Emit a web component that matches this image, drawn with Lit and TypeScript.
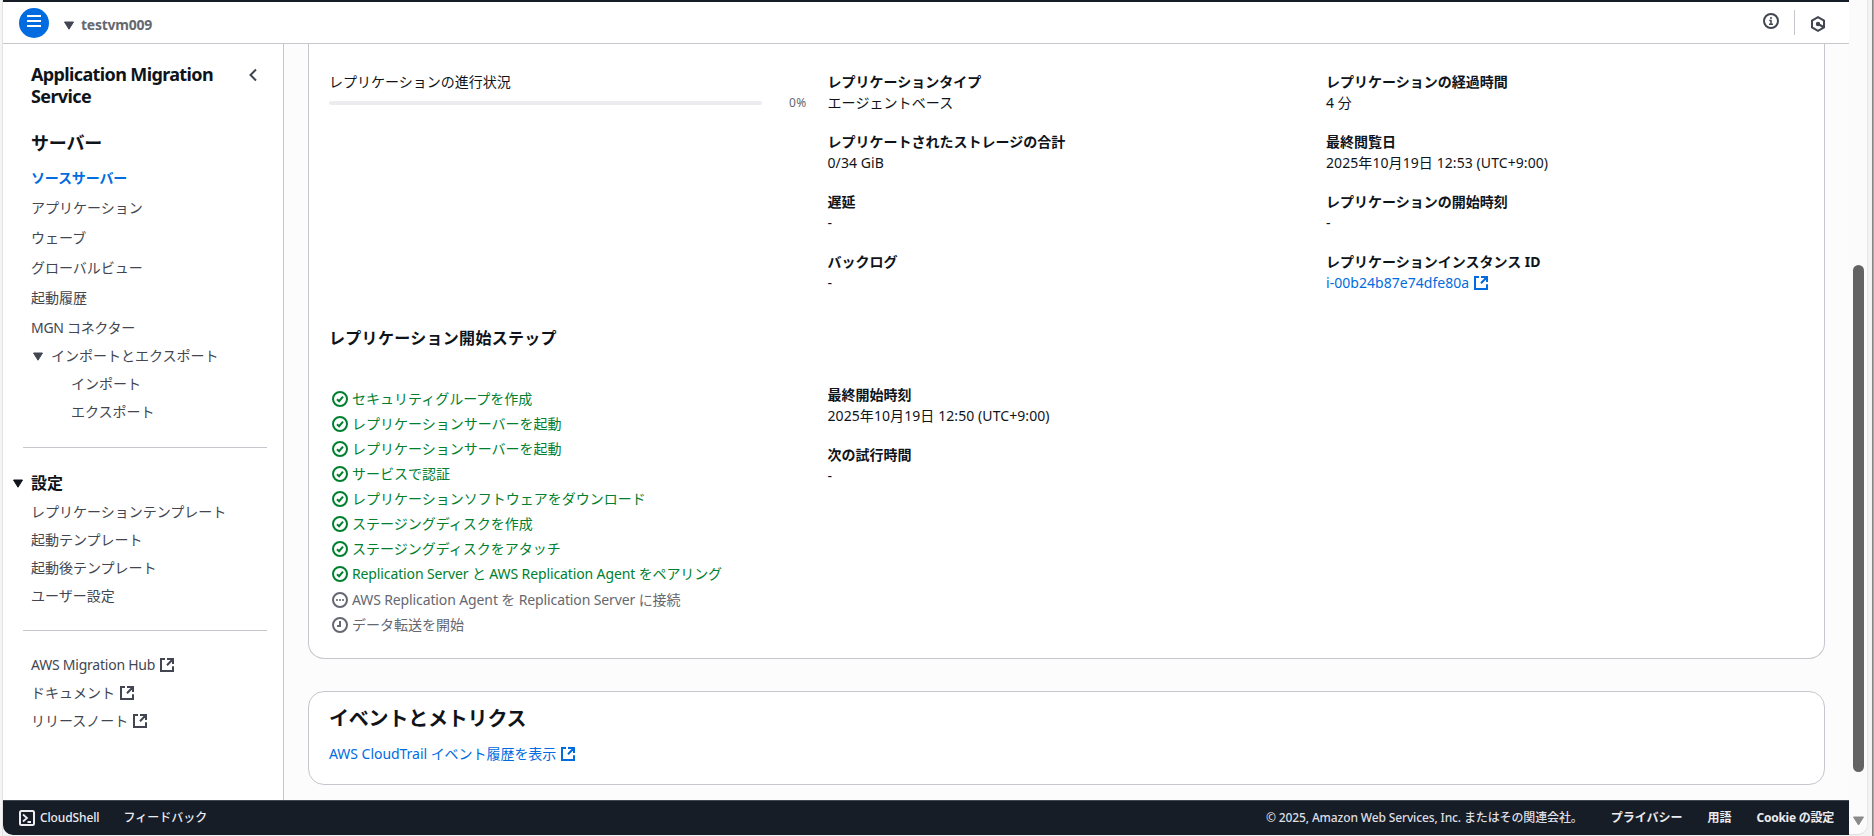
import { LitElement, html, css, svg } from "lit";
import { customElement } from "lit/decorators.js";

type Status = "success" | "progress" | "pending";
interface Field { label: string; value: string; link?: boolean; }

const ext = html`<svg class="ext" viewBox="0 0 16 16" width="16" height="16"><path d="M6 2H2v12h12V9.200M8 2h6v5M14 2 8 8.300" fill="none" stroke="currentColor" stroke-width="2"/></svg>`;
const caret = html`<svg class="caret" viewBox="0 0 10 9" width="10" height="9"><path d="M.5 1h9L5 8.2z" fill="currentColor" stroke="currentColor" stroke-linejoin="round"/></svg>`;

const marks = {
  success: svg`<path d="m5 8.2 2.1 2 3.900-4.600" />`,
  progress: svg`<path d="M4.2 8h1.6M7.2 8h1.6M10.2 8h1.6" />`,
  pending: svg`<path d="M8 4v5H5" />`,
};

const steps: [Status, string][] = [
  ["success", "セキュリティグループを作成"],
  ["success", "レプリケーションサーバーを起動"],
  ["success", "レプリケーションサーバーを起動"],
  ["success", "サービスで認証"],
  ["success", "レプリケーションソフトウェアをダウンロード"],
  ["success", "ステージングディスクを作成"],
  ["success", "ステージングディスクをアタッチ"],
  ["success", "Replication Server と AWS Replication Agent をペアリング"],
  ["progress", "AWS Replication Agent を Replication Server に接続"],
  ["pending", "データ転送を開始"],
];

const colA: Field[] = [
  { label: "レプリケーションタイプ", value: "エージェントベース" },
  { label: "レプリケートされたストレージの合計", value: "0/34 GiB" },
  { label: "遅延", value: "-" },
  { label: "バックログ", value: "-" },
];
const colB: Field[] = [
  { label: "レプリケーションの経過時間", value: "4 分" },
  { label: "最終閲覧日", value: "2025年10月19日 12:53 (UTC+9:00)" },
  { label: "レプリケーションの開始時刻", value: "-" },
  { label: "レプリケーションインスタンス ID", value: "i-00b24b87e74dfe80a", link: true },
];
const colC: Field[] = [
  { label: "最終開始時刻", value: "2025年10月19日 12:50 (UTC+9:00)" },
  { label: "次の試行時間", value: "-" },
];

@customElement("mgn-nav")
class MgnNav extends LitElement {
  static styles = css`
    :host { display: block; box-sizing: border-box; width: 281px; flex: none; background: #fff; border-right: 1px solid #c6c6cd; color: #424650; line-height: 20px; }
    .head { display: flex; justify-content: space-between; padding: 19px 25px 0 28px; color: #0f141a; }
    .title { font-size: 18px; line-height: 22px; font-weight: 700; letter-spacing: -0.63px; }
    .chev { margin-top: 4px; color: #424650; }
    .group { font-size: 18px; line-height: 22px; font-weight: 700; color: #0f141a; padding: 25px 0 0 28px; letter-spacing: -0.2px; }
    .item { height: 20px; padding-left: 28px; margin-bottom: 10px; white-space: nowrap; }
    .list { padding-top: 14px; }
    .active { color: #006ce0; font-weight: 700; letter-spacing: -0.15px; }
    .tight { margin-bottom: 8px; }
    .parent { display: flex; align-items: center; gap: 8px; padding-left: 30px; }
    .child { padding-left: 68px; }
    .near { margin-bottom: 8px; letter-spacing: -0.3px; }
    .rule { border: 0; height: 1px; background: #c6c6cd; margin: 24px 16px 0 20px; }
    .first { margin-top: 25px; }
    .settings { display: flex; align-items: center; gap: 8px; padding: 23px 0 0 10px; color: #0f141a; font-weight: 700; font-size: 16px; line-height: 24px; }
    .sublist { padding-top: 7px; }
    .links { padding-top: 24px; }
    .linkitem { display: flex; align-items: center; gap: 4px; }
    .latin { letter-spacing: -0.23px; }
  `;
  render() {
    return html`
      <div class="head">
        <div class="title">Application Migration<br />Service</div>
        <svg class="chev" width="10" height="16" viewBox="0 0 10 16"><path d="M8 2.500 2.500 8 8 13.500" fill="none" stroke="currentColor" stroke-width="2"/></svg>
      </div>
      <div class="group">サーバー</div>
      <div class="list">
        <div class="item active">ソースサーバー</div>
        ${["アプリケーション", "ウェーブ", "グローバルビュー", "起動履歴"].map((t) => html`<div class="item">${t}</div>`)}
        <div class="item near">MGN コネクター</div>
        <div class="item tight parent">${caret}<span>インポートとエクスポート</span></div>
        <div class="item tight child">インポート</div>
        <div class="item tight child">エクスポート</div>
      </div>
      <hr class="rule first" />
      <div class="settings">${caret}<span>設定</span></div>
      <div class="sublist">
        ${["レプリケーションテンプレート", "起動テンプレート", "起動後テンプレート", "ユーザー設定"].map((t) => html`<div class="item tight">${t}</div>`)}
      </div>
      <hr class="rule" />
      <div class="links">
        <div class="item tight linkitem"><span class="latin">AWS Migration Hub</span>${ext}</div>
        ${["ドキュメント", "リリースノート"].map((t) => html`<div class="item tight linkitem"><span>${t}</span>${ext}</div>`)}
      </div>`;
  }
}

@customElement("app-root")
class AppRoot extends LitElement {
  static styles = css`
    :host { display: flex; box-sizing: border-box; width: 100vw; height: 836px; overflow: hidden; background: #f3f3f3; font-family: "Noto Sans", "Noto Sans CJK JP", sans-serif; font-size: 14px; line-height: 20px; color: #0f141a; }
    .edge { width: 2px; flex: none; background: #f5f5f5; border-right: 1px solid #e2e2e2; }
    .window { width: 1846px; display: flex; flex-direction: column; flex: none; height: 835px; border-radius: 0 0 0 10px; overflow: hidden; }
    header { display: flex; box-sizing: border-box; height: 44px; flex: none; background: #fff; border-top: 2px solid #161d26; border-bottom: 1px solid #c6c6cd; padding: 0 24px 0 16px; align-items: flex-start; }
    .burger { width: 30px; height: 30px; margin-top: 6px; border-radius: 50%; background: #006ce0; }
    .burger svg { display: block; }
    .crumb { display: flex; align-items: center; margin: 13px 0 0 15px; gap: 7px; color: #424650; height: 20px; }
    .crumb b { color: #656871; letter-spacing: -0.25px; }
    .fill { flex: 1; }
    .info { margin: 11px 15px 0 0; }
    .vr { width: 1px; height: 25px; background: #c6c6cd; margin: 8px 16px 0 0; }
    .hex { margin-top: 14px; }
    .body { display: flex; flex: 1; min-height: 0; }
    main { flex: 1; background: #fcfcfd; padding: 0 24px 0 24px; overflow: hidden; }
    .card { box-sizing: border-box; background: #fff; border: 1px solid #c6c6cd; border-radius: 16px; }
    .status { height: 615px; border-top: 0; border-radius: 0 0 16px 16px; padding: 29px 20px 0; }
    .cols { display: grid; grid-template-columns: 479px 479px 1fr; column-gap: 19.5px; }
    .meter { margin-top: -1px; }
    .fields { display: flex; flex-direction: column; gap: 19px; margin-top: -1px; }
    .label { font-weight: 700; margin-bottom: 1px; }
    .value { white-space: nowrap; display: flex; align-items: center; gap: 4px; letter-spacing: 0.08px; }
    .link { color: #006ce0; letter-spacing: 0.04px; }
    .progress { display: flex; align-items: center; height: 20px; margin-top: 1px; }
    .track { width: 433px; height: 4px; border-radius: 2px; background: #ebebf0; }
    .pct { font-size: 12px; color: #656871; margin-left: 27px; letter-spacing: 0.4px; }
    h3 { margin: 33px 0 0; font-size: 16px; line-height: 24px; letter-spacing: 0.3px; }
    .stepcols { margin-top: 36px; }
    .steps { display: flex; flex-direction: column; gap: 5px; padding: 3px 0 0 3px; }
    .step { display: flex; align-items: center; gap: 4px; height: 20px; white-space: nowrap; color: #656871; }
    .latin { letter-spacing: -0.12px; }
    .success { color: #00802f; }
    .step path, .step circle { fill: none; stroke: currentColor; stroke-width: 2; }
    .events { margin-top: 32px; height: 94px; padding: 15px 20px 0; }
    h2 { margin: 0; font-size: 20px; line-height: 24px; letter-spacing: -0.2px; }
    .events .value { margin-top: 13px; letter-spacing: -0.04px; }
    footer { height: 35px; flex: none; background: #161d26; border-top: 1px solid #424650; box-sizing: border-box; display: flex; align-items: center; color: #ebebf0; font-size: 12px; font-weight: 500; padding: 0 15px 0 16px; white-space: nowrap; }
    .shell { display: flex; align-items: center; gap: 5px; margin-right: 24px; letter-spacing: -0.12px; }
    .copy { color: #dedee3; margin-right: 28px; letter-spacing: -0.13px; }
    .foot { margin-right: 25px; font-weight: 700; }
    .last { margin-right: 0; letter-spacing: -0.25px; }
    .scroll { width: 19px; height: 835px; flex: none; background: #fbfbfb; display: flex; flex-direction: column; padding: 265px 0 0 4px; box-sizing: border-box; border-right: 1px solid #e6e6e6; border-bottom: 1px solid #e0e0e0; border-radius: 0 0 10px 0; }
    .thumb { width: 11px; height: 507px; flex: none; border-radius: 6px; background: #636363; }
    .scroll svg { margin: 44px 0 0 -1px; flex: none; }
    .behind { flex: 1; background: #a8a8a8; margin-left: 4px; border-left: 1px solid #858585; }
  `;
  fields(list: Field[]) {
    return html`<div class="fields">${list.map((f) => html`<div><div class="label">${f.label}</div><div class="value ${f.link ? "link" : ""}"><span>${f.value}</span>${f.link ? ext : ""}</div></div>`)}</div>`;
  }
  render() {
    return html`
      <div class="edge"></div>
      <div class="window">
        <header>
          <div class="burger"><svg width="30" height="30" viewBox="0 0 30 30"><path d="M8 8h14M8 13h14M8 18h14" stroke="#fff" stroke-width="2"/></svg></div>
          <div class="crumb">${caret}<b>testvm009</b></div>
          <div class="fill"></div>
          <svg class="info" width="16" height="16" viewBox="0 0 16 16" fill="none" stroke="#424650"><circle cx="8" cy="8" r="7" stroke-width="2"/><path d="M8 4v2M6.300 7.500H8V11M6 11.300h4" stroke-width="1.500"/></svg>
          <div class="vr"></div>
          <svg class="hex" width="14" height="16" viewBox="0 0 14 16" fill="none" stroke="#424650" stroke-width="2"><path d="M7 1.200 13 4.600v6.800L7 14.800 1 11.400V4.600zM7 8l5.500 3"/><circle cx="7" cy="8" r="1.200" fill="#424650"/></svg>
        </header>
        <div class="body">
          <mgn-nav></mgn-nav>
          <main>
            <section class="card status">
              <div class="cols">
                <div class="meter">
                  <div>レプリケーションの進行状況</div>
                  <div class="progress"><div class="track"></div><span class="pct">0%</span></div>
                </div>
                ${this.fields(colA)}${this.fields(colB)}
              </div>
              <h3>レプリケーション開始ステップ</h3>
              <div class="cols stepcols">
                <div class="steps">
                  ${steps.map(([s, t]) => html`<div class="step ${s}"><svg width="16" height="16" viewBox="0 0 16 16"><circle cx="8" cy="8" r="7"/>${marks[s]}</svg><span class=${/[A-Z]/.test(t) ? "latin" : ""}>${t}</span></div>`)}
                </div>
                ${this.fields(colC)}
              </div>
            </section>
            <section class="card events">
              <h2>イベントとメトリクス</h2>
              <div class="value link"><span>AWS CloudTrail イベント履歴を表示</span>${ext}</div>
            </section>
          </main>
        </div>
        <footer>
          <div class="shell"><svg width="16" height="16" viewBox="0 0 16 16" fill="none" stroke="#ebebf0"><rect x="1" y="1" width="14" height="14" rx="1.500" stroke-width="2"/><path d="m4 4.500 4 3.500-4 3.500M8.500 12H12" stroke-width="1.800"/></svg><span>CloudShell</span></div>
          <span>フィードバック</span>
          <div class="fill"></div>
          <span class="copy">© 2025, Amazon Web Services, Inc. またはその関連会社。</span>
          <span class="foot">プライバシー</span><span class="foot">用語</span><span class="foot last">Cookie の設定</span>
        </footer>
      </div>
      <div class="scroll"><div class="thumb"></div><svg width="13" height="10" viewBox="0 0 13 10"><path d="M1.500 1h10L6.500 9z" fill="#8a8a8a" stroke="#8a8a8a" stroke-linejoin="round"/></svg></div>
      <div class="behind"></div>`;
  }
}
